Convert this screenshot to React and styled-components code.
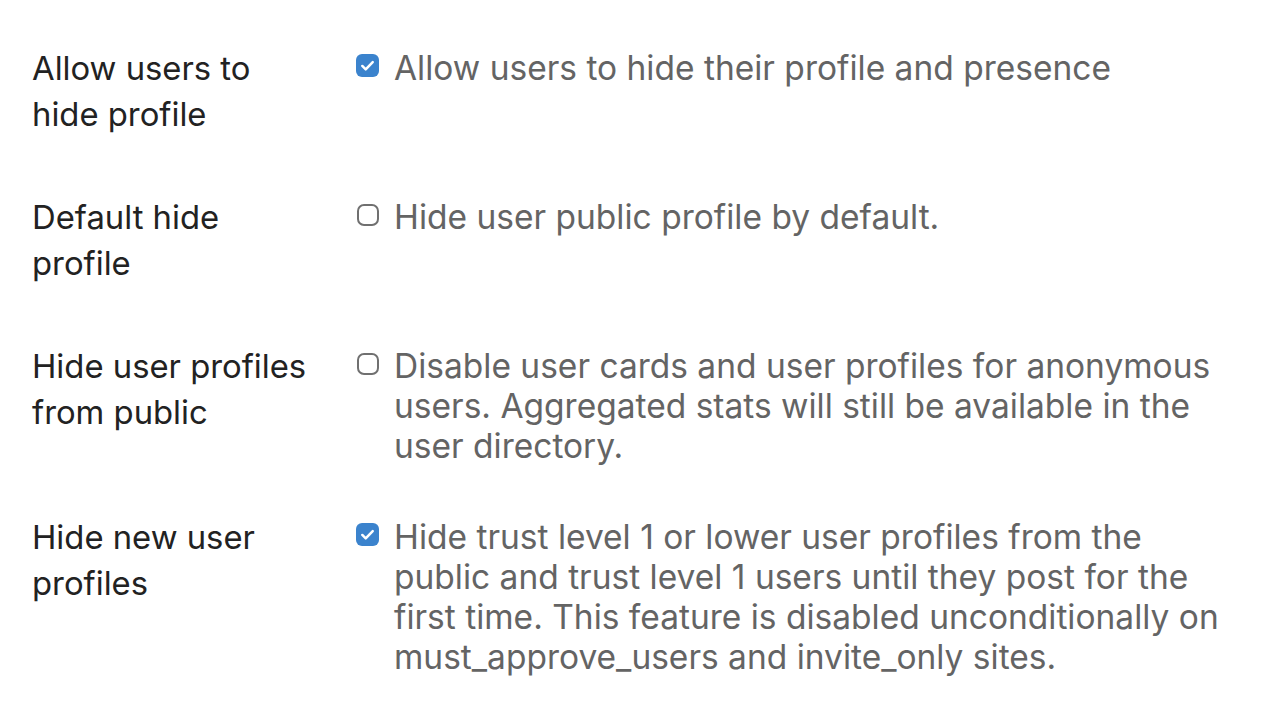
import React from "react";
import styled, { createGlobalStyle } from "styled-components";

const Global = createGlobalStyle`
  html, body { margin: 0; padding: 0; background: #fff; }
  body { font-family: Inter, "Noto Sans", sans-serif; }
`;

const Page = styled.div`
  padding: 45px 32px 0 32px;
  display: flex;
  flex-direction: column;
  gap: 48px;
`;

const Row = styled.div`
  display: grid;
  grid-template-columns: 324px 1fr;
  min-height: 101px;
`;

const Label = styled.div`
  font-size: 32.8px;
  line-height: 46px;
  color: #222;
  padding-right: 8px;
`;

const Value = styled.label`
  display: flex;
  align-items: flex-start;
  gap: 15px;
  padding-top: 3px;
`;

const Box = styled.span`
  flex: none;
  width: ${(p) => (p.$checked ? "23px" : "22px")};
  height: ${(p) => (p.$checked ? "23px" : "22px")};
  margin-top: ${(p) => (p.$checked ? "6px" : "7px")};
  margin-left: ${(p) => (p.$checked ? "0" : "1px")};
  box-sizing: border-box;
  border-radius: ${(p) => (p.$checked ? "6px" : "7px")};
  display: flex;
  align-items: center;
  justify-content: center;
  background: ${(p) => (p.$checked ? "#3b83cd" : "#fff")};
  border: ${(p) => (p.$checked ? "none" : "2px solid #707070")};
`;

const Desc = styled.div`
  font-size: 33.5px;
  line-height: 40px;
  color: #646464;
  max-width: 840px;
`;

const Check = () => (
  <svg width="19" height="19" viewBox="0 0 16 16" fill="none">
    <path d="M3.6 8.4l2.9 2.9L12.4 5.2" stroke="#fff" strokeWidth="2.1" strokeLinecap="round" strokeLinejoin="round" />
  </svg>
);

const settings = [
  { label: ["Allow users to", "hide profile"], checked: true, desc: "Allow users to hide their profile and presence" },
  { label: ["Default hide", "profile"], checked: false, desc: "Hide user public profile by default." },
  { label: ["Hide user profiles", "from public"], checked: false, desc: "Disable user cards and user profiles for anonymous users. Aggregated stats will still be available in the user directory." },
  { label: ["Hide new user", "profiles"], checked: true, desc: "Hide trust level 1 or lower user profiles from the public and trust level 1 users until they post for the first time. This feature is disabled unconditionally on must_approve_users and invite_only sites." },
];

export default function App() {
  return (
    <>
      <Global />
      <Page>
        {settings.map((s, i) => (
          <Row key={i}>
            <Label>
              {s.label.map((l, j) => (
                <div key={j}>{l}</div>
              ))}
            </Label>
            <Value>
              <Box $checked={s.checked}>{s.checked && <Check />}</Box>
              <Desc>{s.desc}</Desc>
            </Value>
          </Row>
        ))}
      </Page>
    </>
  );
}
